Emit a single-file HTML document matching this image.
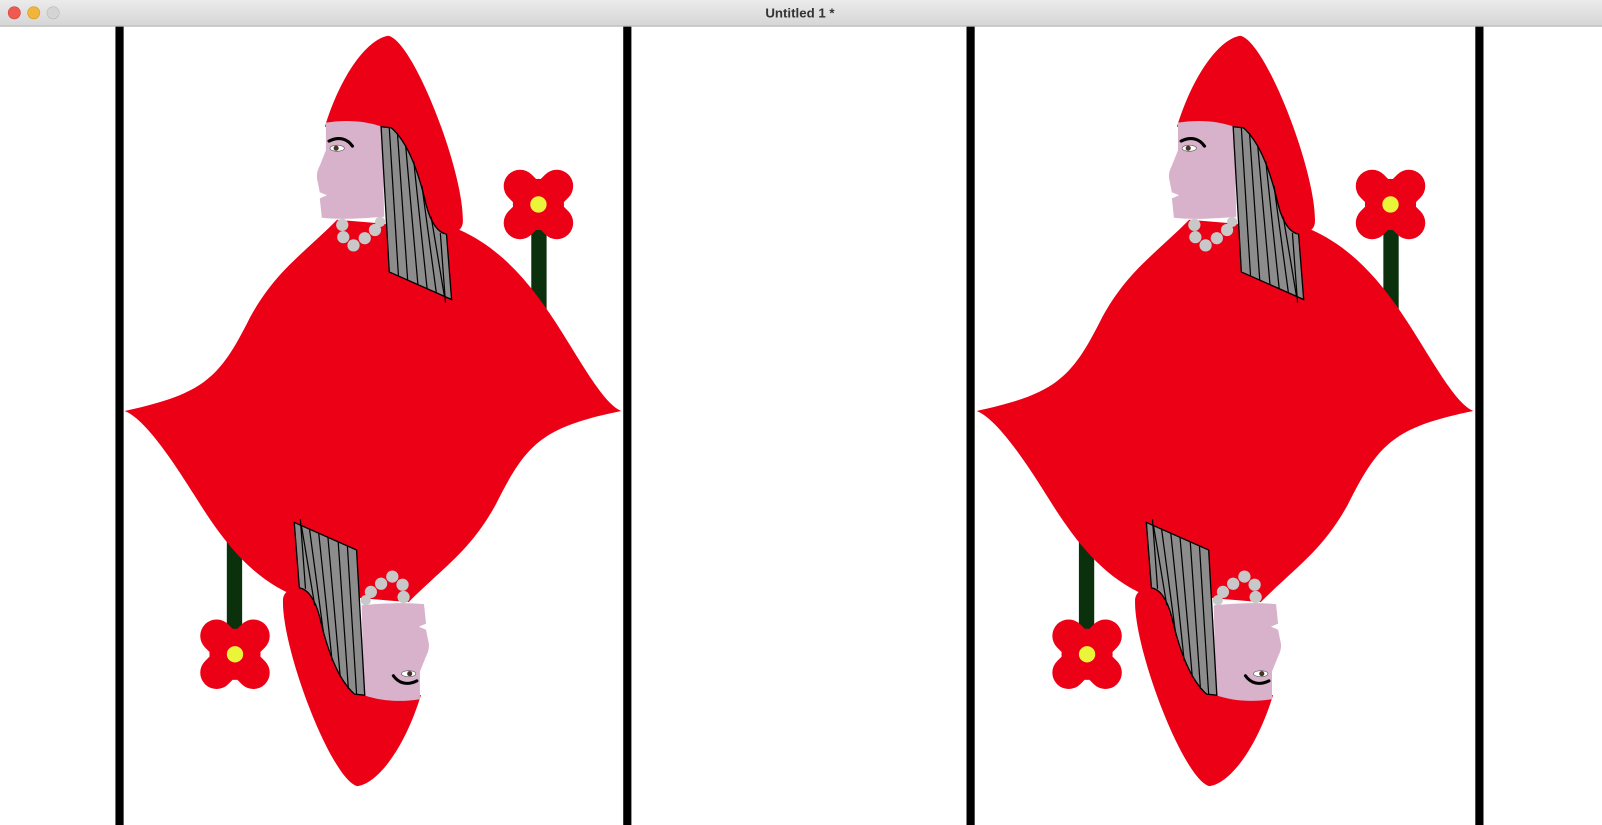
<!DOCTYPE html>
<html><head><meta charset="utf-8"><style>
html,body{margin:0;padding:0;background:#fff;overflow:hidden}
svg{display:block}
</style></head><body>
<svg width="1602" height="825" viewBox="0 0 1568 807" preserveAspectRatio="none" xmlns="http://www.w3.org/2000/svg">
<defs>
<linearGradient id="tb" x1="0" y1="0" x2="0" y2="1"><stop offset="0" stop-color="#ebebeb"/><stop offset="1" stop-color="#d5d5d5"/></linearGradient>
<g id="flower">
  <g stroke="#ec0016" stroke-width="32" stroke-linecap="round">
    <line x1="-18" y1="-18" x2="18" y2="18"/>
    <line x1="-18" y1="18" x2="18" y2="-18"/>
  </g>
  <circle r="25" fill="#ec0016"/>
  <circle r="8" fill="#eaf53a"/>
</g>
<g id="head">
  <path d="M318,124 C334,72 360,38 380,35 C405,40 455,170 453,218 C451,232 430,231 425,222 L370,130 Z" fill="#ec0016"/>
  <path d="M319,120 C338,117 357,118 374,124 L376,212 C352,214 333,215 315,213 L313,194 L320,191 L313,188 L311,178 C309,171 311,166 313,162 L319,147 Z" fill="#d8b2ca"/>
  <path d="M373,124 L383,125 C400,140 410,170 417,200 C422,220 430,228 437,229 L442,293 L381,266 Z" fill="#8c8c8c" stroke="#000" stroke-width="1.3"/>
  <g stroke="#000" stroke-width="1.2">
    <line x1="381" y1="125" x2="390" y2="270"/>
    <line x1="389" y1="130" x2="399" y2="274"/>
    <line x1="397" y1="142" x2="409" y2="278"/>
    <line x1="405" y1="158" x2="418" y2="282"/>
    <line x1="413" y1="182" x2="427" y2="286"/>
    <line x1="422" y1="212" x2="435" y2="290"/>
    <line x1="431" y1="228" x2="436" y2="296"/>
  </g>
  <path d="M322,138 C332,133 340,136 345,143" fill="none" stroke="#000" stroke-width="3" stroke-linecap="round"/>
  <ellipse cx="330" cy="145" rx="7" ry="3" fill="#fff" stroke="#555" stroke-width="0.6"/>
  <circle cx="329" cy="145" r="2.5" fill="#4a3324"/>
  <g fill="#c8c8c8">
    <circle cx="335" cy="220" r="6"/><circle cx="336" cy="232" r="6"/><circle cx="346" cy="240" r="6"/>
    <circle cx="357" cy="233" r="6"/><circle cx="367" cy="225" r="6"/><circle cx="372" cy="217" r="5"/>
  </g>
</g>
<g id="card">
  <rect x="520" y="215" width="15" height="110" fill="#0a300c"/>
  <rect x="222" y="500" width="15" height="120" fill="#0a300c"/>
  <use href="#flower" transform="translate(527 200)"/>
  <use href="#flower" transform="translate(230 640)"/>
  <path d="M122,402 C200,385 215,370 245,310 C270,265 295,250 330,215 L450,225 C495,245 525,285 550,325 C575,365 592,395 608,402 C530,418 515,434 485,494 C460,539 435,554 400,589 L280,579 C240,559 215,524 190,484 C165,444 140,409 122,402 Z" fill="#ec0016"/>
  <use href="#head"/>
  <use href="#head" transform="rotate(180 365 402)"/>
</g>
</defs>
<rect x="0" y="26" width="1568" height="781" fill="#fff"/>
<use href="#card"/>
<use href="#card" transform="translate(834 0)"/>
<g fill="#000">
  <rect x="113" y="26" width="8" height="781"/>
  <rect x="610" y="26" width="8" height="781"/>
  <rect x="946" y="26" width="8" height="781"/>
  <rect x="1444" y="26" width="8" height="781"/>
</g>
<rect x="0" y="0" width="1568" height="26" fill="url(#tb)"/>
<rect x="0" y="25" width="1568" height="1" fill="#b0b0b0"/>
<circle cx="14" cy="12.5" r="6" fill="#ee5a52" stroke="#d0443c" stroke-width="0.6"/>
<circle cx="33" cy="12.5" r="6" fill="#f1b53a" stroke="#d59a25" stroke-width="0.6"/>
<circle cx="52" cy="12.5" r="6" fill="#d4d4d4" stroke="#b8b8b8" stroke-width="0.6"/>
<text x="783" y="17" text-anchor="middle" font-family="Liberation Sans, sans-serif" font-size="13" font-weight="bold" fill="#333">Untitled 1 *</text>
</svg>
</body></html>
